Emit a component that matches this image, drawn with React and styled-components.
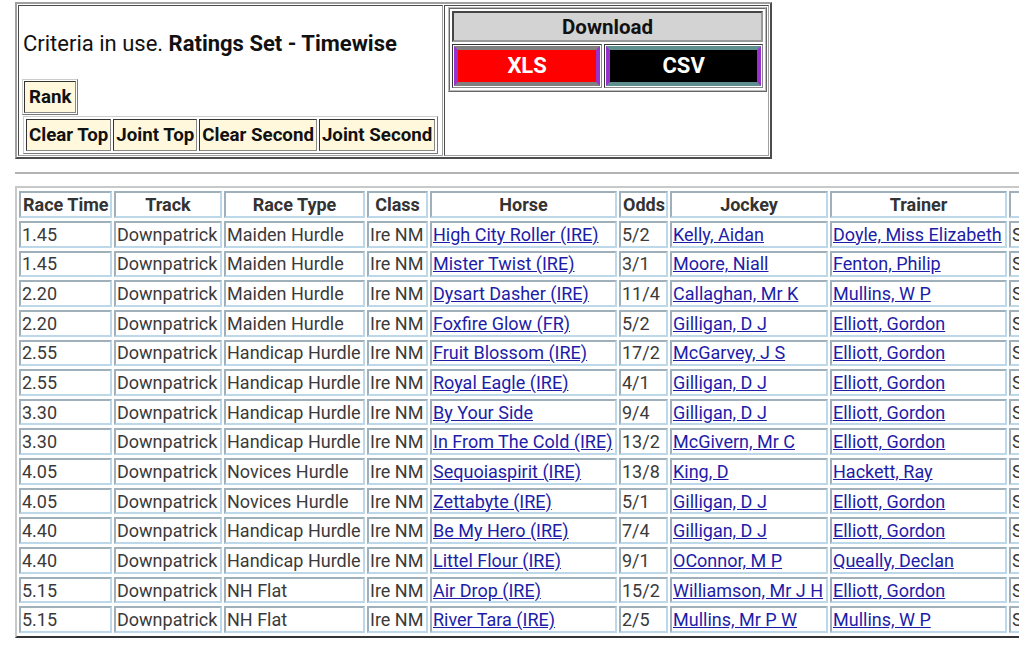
import React from "react"
import styled, { createGlobalStyle } from "styled-components"

const GlobalStyle = createGlobalStyle`
  html, body {
    margin: 0;
    padding: 0;
    background: #fff;
    overflow: hidden;
    font-family: Roboto, "Noto Sans", "Liberation Sans", sans-serif;
    color: #333;
  }
`

const Page = styled.div`
  padding: 2px 0 0 15px;
  width: 1300px;
`

// top panel
const TopTable = styled.table`
  border: 2px outset #a0a0a0;
  border-spacing: 1px;
  border-collapse: separate;
  width: 757px;
  height: 157px;
`

const TopCell = styled.td`
  border: 1px inset #a0a0a0;
  vertical-align: top;
  padding: 0;
  width: ${(p) => p.$w}px;
`

const Criteria = styled.div`
  font-size: 22px;
  color: #111;
  padding: 25px 0 0 4px;
  height: 48px;
  white-space: nowrap;
  b { font-weight: 700; }
`

const RankTable = styled.table`
  margin-left: 3px;
  border: 1px outset #ccc;
  border-spacing: 1px;
`

const BtnRow = styled.table`
  margin-left: 4px;
  border: 1px outset #ccc;
  border-spacing: 2px;
  margin-top: 1px;
`

const Btn = styled.td`
  background: #fff8dc;
  border: 1px inset #888;
  font-size: 18.7px;
  font-weight: 700;
  color: #111;
  padding: 3px ${(p) => (p.$wide ? 4 : 2)}px;
  height: 24px;
  white-space: nowrap;
`

const DlTable = styled.table`
  margin: 1px 0 0 3px;
  border: 2px ridge #bbb;
  border-spacing: 2px;
  width: 319px;
`

const DlHead = styled.td`
  background: #d3d3d3;
  border: 2px inset #999;
  text-align: center;
  font-size: 20.5px;
  font-weight: 700;
  color: #111;
  height: 27px;
  padding: 0;
`

const DlCell = styled.td`
  border: 1px inset #888;
  padding: 1px;
`

const DlBtn = styled.div`
  background: ${(p) => p.$bg};
  border: 4px solid;
  border-color: ${(p) => p.$edge} #9932cc;
  color: #fff;
  font-size: 22px;
  font-weight: 700;
  text-align: center;
  height: 32px;
  line-height: 32px;
`

const Rule = styled.hr`
  margin: 13px 0 12px 0;
  border: 0;
  border-top: 2px solid #b4b4b4;
  width: 1004px;
`

// results table
const Results = styled.table`
  border: 2px solid;
  border-color: #c8c8c8 #333 #333 #c8c8c8;
  border-spacing: 2px 3px;
  table-layout: fixed;
  width: ${(p) => p.$w}px;
`

const Th = styled.th`
  box-sizing: border-box;
  width: ${(p) => p.$w}px;
  height: 27px;
  padding: 0 2px;
  border: 2px solid;
  border-color: #9fb0bb #bcd8e9 #bcd8e9 #9fb0bb;
  font-size: 18px;
  font-weight: 700;
  color: #333;
  text-align: center;
  white-space: nowrap;
  overflow: hidden;
`

const Td = styled.td`
  box-sizing: border-box;
  height: 26.65px;
  padding: 0 2px 0 1px;
  border: 2px solid;
  border-color: #9fb0bb #bcd8e9 #bcd8e9 #9fb0bb;
  font-size: 18px;
  color: #3a3a3a;
  white-space: nowrap;
  overflow: hidden;
  a {
    color: #1d1da8;
    text-decoration: underline;
  }
`

const cols = [
  ["Race Time", 93],
  ["Track", 108],
  ["Race Type", 141],
  ["Class", 61],
  ["Horse", 187],
  ["Odds", 49],
  ["Jockey", 158],
  ["Trainer", 177],
  ["Selection", 120],
]

const tableWidth = cols.reduce((s, c) => s + c[1], 0) + (cols.length + 1) * 2 + 4

const rows = [
  ["1.45", "Maiden Hurdle", "High City Roller (IRE)", "5/2", "Kelly, Aidan", "Doyle, Miss Elizabeth"],
  ["1.45", "Maiden Hurdle", "Mister Twist (IRE)", "3/1", "Moore, Niall", "Fenton, Philip"],
  ["2.20", "Maiden Hurdle", "Dysart Dasher (IRE)", "11/4", "Callaghan, Mr K", "Mullins, W P"],
  ["2.20", "Maiden Hurdle", "Foxfire Glow (FR)", "5/2", "Gilligan, D J", "Elliott, Gordon"],
  ["2.55", "Handicap Hurdle", "Fruit Blossom (IRE)", "17/2", "McGarvey, J S", "Elliott, Gordon"],
  ["2.55", "Handicap Hurdle", "Royal Eagle (IRE)", "4/1", "Gilligan, D J", "Elliott, Gordon"],
  ["3.30", "Handicap Hurdle", "By Your Side", "9/4", "Gilligan, D J", "Elliott, Gordon"],
  ["3.30", "Handicap Hurdle", "In From The Cold (IRE)", "13/2", "McGivern, Mr C", "Elliott, Gordon"],
  ["4.05", "Novices Hurdle", "Sequoiaspirit (IRE)", "13/8", "King, D", "Hackett, Ray"],
  ["4.05", "Novices Hurdle", "Zettabyte (IRE)", "5/1", "Gilligan, D J", "Elliott, Gordon"],
  ["4.40", "Handicap Hurdle", "Be My Hero (IRE)", "7/4", "Gilligan, D J", "Elliott, Gordon"],
  ["4.40", "Handicap Hurdle", "Littel Flour (IRE)", "9/1", "OConnor, M P", "Queally, Declan"],
  ["5.15", "NH Flat", "Air Drop (IRE)", "15/2", "Williamson, Mr J H", "Elliott, Gordon"],
  ["5.15", "NH Flat", "River Tara (IRE)", "2/5", "Mullins, Mr P W", "Mullins, W P"],
]

export default function App() {
  return (
    <Page>
      <GlobalStyle />
      <TopTable>
        <tbody>
          <tr>
            <TopCell $w={423}>
              <Criteria>
                Criteria in use. <b>Ratings Set - Timewise</b>
              </Criteria>
              <RankTable>
                <tbody>
                  <tr>
                    <Btn $wide>Rank</Btn>
                  </tr>
                </tbody>
              </RankTable>
              <BtnRow>
                <tbody>
                  <tr>
                    <Btn>Clear Top</Btn>
                    <Btn>Joint Top</Btn>
                    <Btn>Clear Second</Btn>
                    <Btn>Joint Second</Btn>
                  </tr>
                </tbody>
              </BtnRow>
            </TopCell>
            <TopCell>
              <DlTable>
                <tbody>
                  <tr>
                    <DlHead colSpan={2}>Download</DlHead>
                  </tr>
                  <tr>
                    <DlCell>
                      <DlBtn $bg="#ff0000" $edge="#808080">XLS</DlBtn>
                    </DlCell>
                    <DlCell>
                      <DlBtn $bg="#000000" $edge="#5f8f8f">CSV</DlBtn>
                    </DlCell>
                  </tr>
                </tbody>
              </DlTable>
            </TopCell>
          </tr>
        </tbody>
      </TopTable>
      <Rule />
      <Results $w={tableWidth}>
        <thead>
          <tr>
            {cols.map(([name, w], i) => (
              <Th key={name} $w={w}>
                {i === cols.length - 1 ? "" : name}
              </Th>
            ))}
          </tr>
        </thead>
        <tbody>
          {rows.map((r, i) => (
            <tr key={i}>
              <Td>{r[0]}</Td>
              <Td>Downpatrick</Td>
              <Td>{r[1]}</Td>
              <Td>Ire NM</Td>
              <Td><a href="#">{r[2]}</a></Td>
              <Td>{r[3]}</Td>
              <Td><a href="#">{r[4]}</a></Td>
              <Td><a href="#">{r[5]}</a></Td>
              <Td>Show</Td>
            </tr>
          ))}
        </tbody>
      </Results>
    </Page>
  )
}
